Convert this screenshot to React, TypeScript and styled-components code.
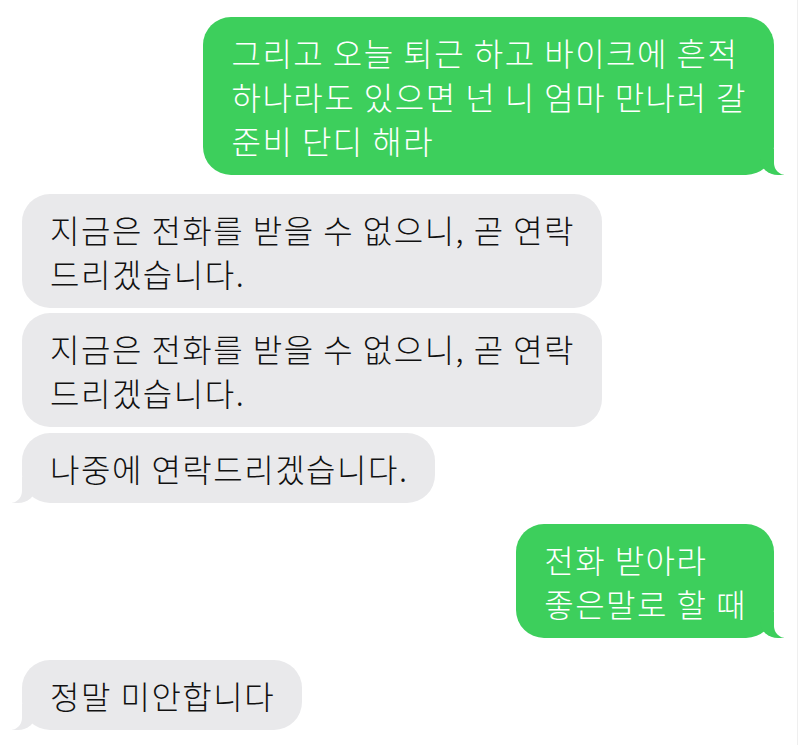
import styled, { createGlobalStyle } from 'styled-components';

const GlobalStyle = createGlobalStyle`
  html, body {
    margin: 0;
    padding: 0;
    background: #ffffff;
  }
  body {
    font-family: 'Noto Sans CJK KR', 'Noto Sans', sans-serif;
  }
`;

type Side = 'me' | 'them';

interface Message {
  side: Side;
  lines: string[];
  tail?: boolean;
  gap: number;
}

const messages: Message[] = [
  {
    side: 'me',
    lines: ['그리고 오늘 퇴근 하고 바이크에 흔적', '하나라도 있으면 넌 니 엄마 만나러 갈', '준비 단디 해라'],
    tail: true,
    gap: 0,
  },
  {
    side: 'them',
    lines: ['지금은 전화를 받을 수 없으니, 곧 연락', '드리겠습니다.'],
    gap: 19,
  },
  {
    side: 'them',
    lines: ['지금은 전화를 받을 수 없으니, 곧 연락', '드리겠습니다.'],
    gap: 5,
  },
  {
    side: 'them',
    lines: ['나중에 연락드리겠습니다.'],
    tail: true,
    gap: 6,
  },
  {
    side: 'me',
    lines: ['전화 받아라', '좋은말로 할 때'],
    tail: true,
    gap: 21,
  },
  {
    side: 'them',
    lines: ['정말 미안합니다'],
    tail: true,
    gap: 22,
  },
];

export default function App() {
  return (
    <>
      <GlobalStyle />
      <Thread>
        {messages.map((m, i) => (
          <Bubble key={i} side={m.side} tail={!!m.tail} gap={m.gap}>
            {m.lines.map((line, j) => (
              <Line key={j}>{line}</Line>
            ))}
          </Bubble>
        ))}
      </Thread>
    </>
  );
}

const GREEN = '#3dcf5c';
const GRAY = '#e9e9eb';

const Thread = styled.div`
  width: 798px;
  height: 745px;
  box-sizing: border-box;
  border-right: 1px solid #efefef;
  padding: 17px 23px 0 22px;
  display: flex;
  flex-direction: column;
  overflow: hidden;
`;

interface BubbleProps {
  side: Side;
  tail: boolean;
  gap: number;
}

const Bubble = styled.div<BubbleProps>`
  position: relative;
  align-self: ${(p) => (p.side === 'me' ? 'flex-end' : 'flex-start')};
  margin-top: ${(p) => p.gap}px;
  padding: 13px 27px 13px 28px;
  border-radius: 28px;
  background: ${(p) => (p.side === 'me' ? GREEN : GRAY)};
  color: ${(p) => (p.side === 'me' ? '#ffffff' : '#111111')};
  font-size: 32px;
  font-weight: 300;
  letter-spacing: 1.5px;
  line-height: 44px;

  &::before {
    content: '';
    display: ${(p) => (p.tail ? 'block' : 'none')};
    position: absolute;
    bottom: 0;
    ${(p) => (p.side === 'me' ? 'right: -10px;' : 'left: -10px;')}
    width: 24px;
    height: 26px;
    background: ${(p) => (p.side === 'me' ? GREEN : GRAY)};
    ${(p) =>
      p.side === 'me'
        ? 'border-bottom-left-radius: 18px 16px;'
        : 'border-bottom-right-radius: 18px 16px;'}
  }

  &::after {
    content: '';
    display: ${(p) => (p.tail ? 'block' : 'none')};
    position: absolute;
    bottom: 0;
    ${(p) => (p.side === 'me' ? 'right: -14px;' : 'left: -14px;')}
    width: 14px;
    height: 26px;
    background: #ffffff;
    ${(p) =>
      p.side === 'me'
        ? 'border-bottom-left-radius: 12px;'
        : 'border-bottom-right-radius: 12px;'}
  }
`;

const Line = styled.div`
  white-space: nowrap;
`;
